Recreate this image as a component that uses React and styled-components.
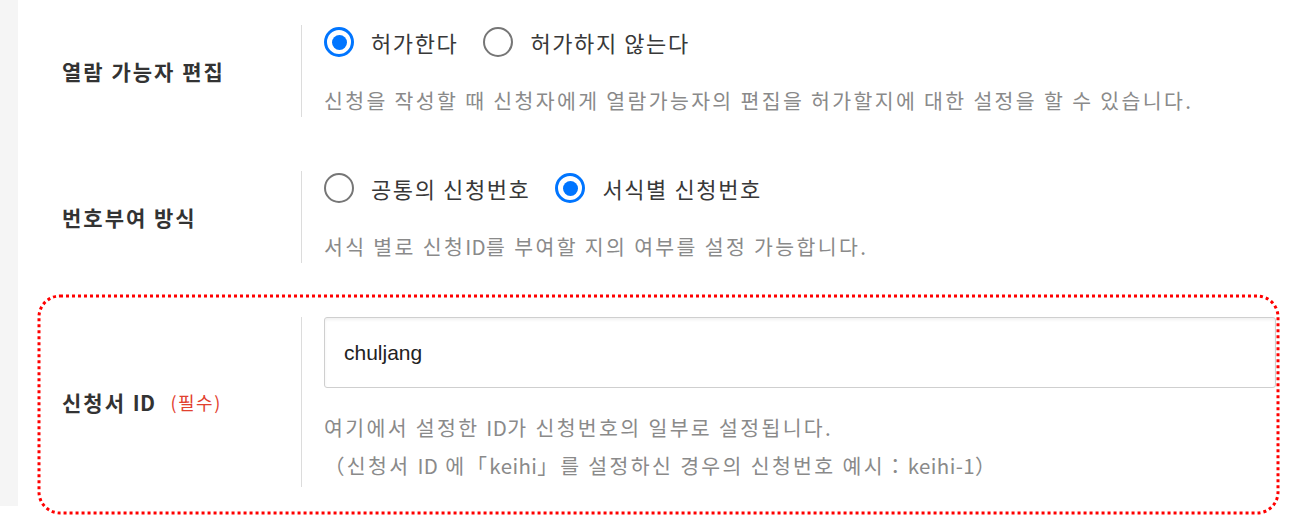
import styled, { createGlobalStyle } from 'styled-components'

const GlobalStyle = createGlobalStyle`
    html, body {
        margin: 0;
        padding: 0;
        background: #fff;
    }
    body {
        font-family: "Noto Sans CJK KR", "Noto Sans", sans-serif;
    }
    #root {
        min-height: 522px;
    }
`

const Page = styled.div`
    display: flex;
    height: 506px;
    background: #f5f5f5;
    padding-left: 18px;
`

const Card = styled.div`
    flex: 1;
    background: #fff;
    display: flex;
    flex-direction: column;
    gap: 54px;
    padding: 25px 16px 0 44px;
`

const Row = styled.div`
    position: relative;
    display: flex;
`

// red dotted annotation round the required row
const Marker = styled.svg`
    position: absolute;
    left: -23.5px;
    top: -21.5px;
    width: calc(100% + 25px);
    height: calc(100% + 47px);
    overflow: visible;
    pointer-events: none;
`

const Label = styled.div`
    width: 239px;
    flex-shrink: 0;
    display: flex;
    align-items: center;
    font-size: 21px;
    font-weight: 700;
    letter-spacing: 2px;
    color: #333;
`

const Required = styled.span`
    margin-left: 15px;
    font-size: 18px;
    font-weight: 400;
    letter-spacing: 1.5px;
    color: #e2412f;
`

const Content = styled.div`
    flex: 1;
    border-left: 1px solid #dcdcdc;
    padding: 0 0 3px 22px;
    display: flex;
    flex-direction: column;
`

const RadioGroup = styled.div`
    display: flex;
    align-items: center;
    height: 34px;
    gap: 25px;
`

const Option = styled.label`
    display: flex;
    align-items: center;
    gap: 17px;
    font-size: 22px;
    letter-spacing: 1.6px;
    color: #383838;
`

const Dot = styled.span`
    box-sizing: border-box;
    width: 30px;
    height: 30px;
    border-radius: 50%;
    border: ${p => (p.$on ? '3px solid #0075ff' : '2px solid #767676')};
    display: flex;
    align-items: center;
    justify-content: center;
    &::before {
        content: '';
        width: 15px;
        height: 15px;
        border-radius: 50%;
        background: ${p => (p.$on ? '#0075ff' : 'transparent')};
    }
`

const Desc = styled.div`
    margin-top: ${p => p.$top ?? 27}px;
    line-height: ${p => p.$lh || 28}px;
    font-size: 20.5px;
    letter-spacing: 2.35px;
    color: #8a8a8a;
`

const Latin = styled.span`
    letter-spacing: 0.4px;
`

const Input = styled.input`
    box-sizing: border-box;
    height: 71px;
    width: 100%;
    border: 1px solid #cfcfcf;
    border-radius: 3px;
    box-shadow: inset 0 2px 3px rgba(0, 0, 0, 0.06);
    padding: 0 19px;
    font-family: "Liberation Sans", Arial, sans-serif;
    font-size: 21px;
    color: #222;
    outline: none;
`

function Radio({on, children}){
    return(
        <Option>
            <Dot $on={on}/>
            {children}
        </Option>
    )
}

export default function App(){
    return(
        <>
            <GlobalStyle/>
            <Page>
                <Card>
                    <Row>
                        <Label>열람 가능자 편집</Label>
                        <Content>
                            <RadioGroup>
                                <Radio on>허가한다</Radio>
                                <Radio>허가하지 않는다</Radio>
                            </RadioGroup>
                            <Desc>신청을 작성할 때 신청자에게 열람가능자의 편집을 허가할지에 대한 설정을 할 수 있습니다.</Desc>
                        </Content>
                    </Row>
                    <Row>
                        <Label>번호부여 방식</Label>
                        <Content>
                            <RadioGroup>
                                <Radio>공통의 신청번호</Radio>
                                <Radio on>서식별 신청번호</Radio>
                            </RadioGroup>
                            <Desc>서식 별로 신청<Latin>ID</Latin>를 부여할 지의 여부를 설정 가능합니다.</Desc>
                        </Content>
                    </Row>
                    <Row>
                        <Label>
                            <span>신청서 <Latin>ID</Latin></span>
                            <Required>(필수)</Required>
                        </Label>
                        <Content>
                            <Input defaultValue="chuljang"/>
                            <Desc $top={20} $lh={38}>
                                여기에서 설정한 <Latin>ID</Latin>가 신청번호의 일부로 설정됩니다.<br/>
                                （신청서 <Latin>ID</Latin> 에「<Latin>keihi</Latin>」를 설정하신 경우의 신청번호 예시：<Latin>keihi-1</Latin>）
                            </Desc>
                        </Content>
                        <Marker>
                            <rect x="0" y="0" width="100%" height="100%" rx="21" ry="21"
                                fill="none" stroke="#ff0000" strokeWidth="3" strokeDasharray="3 3"/>
                        </Marker>
                    </Row>
                </Card>
            </Page>
        </>
    )
}
